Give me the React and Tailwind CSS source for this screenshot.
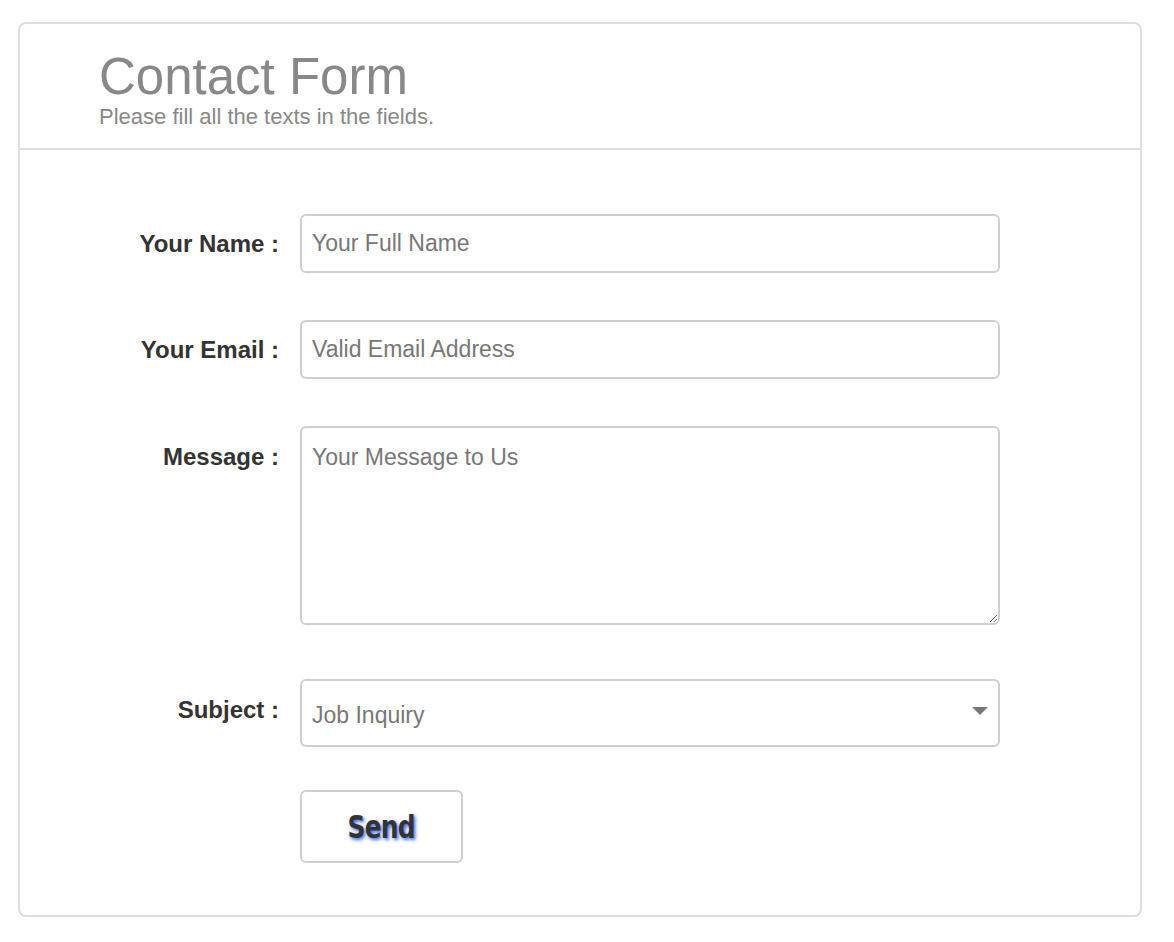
import React from "react";

const labelCls =
  "w-[280px] shrink-0 text-right pr-[21px] text-[24px] font-bold text-[#333]";
const fieldCls =
  "w-[700px] rounded-md border-2 border-[#cfcfcf] bg-white px-[10px] text-[23px] text-[#555] placeholder:text-[#777] outline-none";

function App() {
  return (
    <div className="min-h-[942px] bg-white pt-[22px] font-['Liberation_Sans',Arial,sans-serif]">
      <div className="ml-[18px] w-[1124px] rounded-lg border-2 border-[#dedede] bg-white">
        {/* header */}
        <div className="border-b-2 border-[#dedede] pl-[79px] pt-[25px] pb-[19px]">
          <h1 className="text-[51px] leading-[56px] text-[#888]">Contact Form</h1>
          <p className="text-[22px] leading-[24px] text-[#888]">
            Please fill all the texts in the fields.
          </p>
        </div>

        {/* form */}
        <form className="flex flex-col pt-[64px] pb-[52px]" onSubmit={(e) => e.preventDefault()}>
          <div className="flex items-center">
            <label className={labelCls}>Your Name :</label>
            <input className={`${fieldCls} h-[59px]`} placeholder="Your Full Name" />
          </div>

          <div className="mt-[47px] flex items-center">
            <label className={labelCls}>Your Email :</label>
            <input className={`${fieldCls} h-[59px]`} placeholder="Valid Email Address" />
          </div>

          <div className="mt-[47px] flex items-start">
            <label className={`${labelCls} pt-[13px]`}>Message :</label>
            <textarea
              className={`${fieldCls} h-[199px] pt-[12px]`}
              placeholder="Your Message to Us"
            />
          </div>

          <div className="mt-[54px] flex items-center">
            <label className={`${labelCls} -mt-[6px]`}>Subject :</label>
            <div className="relative">
              <select
                className={`${fieldCls} h-[68px] appearance-none pt-[4px] text-[#777]`}
                defaultValue="job"
              >
                <option value="job">Job Inquiry</option>
                <option value="general">General Question</option>
                <option value="other">Other</option>
              </select>
              <svg
                className="pointer-events-none absolute right-[12px] top-[28px]"
                width="16"
                height="8"
                viewBox="0 0 16 8"
              >
                <path d="M0 0h16L8 8z" fill="#777" />
              </svg>
            </div>
          </div>

          <div className="mt-[43px] flex">
            <div className="w-[280px] shrink-0" />
            <button
              type="submit"
              className="h-[73px] w-[163px] rounded-md border-2 border-[#cfcfcf] bg-white font-['DejaVu_Sans',sans-serif] text-[32px] font-bold text-[#333] [text-shadow:2px_2px_4px_#3d6df2]"
            >
              <span className="inline-block scale-x-[0.78] tracking-[-1px]">Send</span>
            </button>
          </div>
        </form>
      </div>
    </div>
  );
}

export default App;
